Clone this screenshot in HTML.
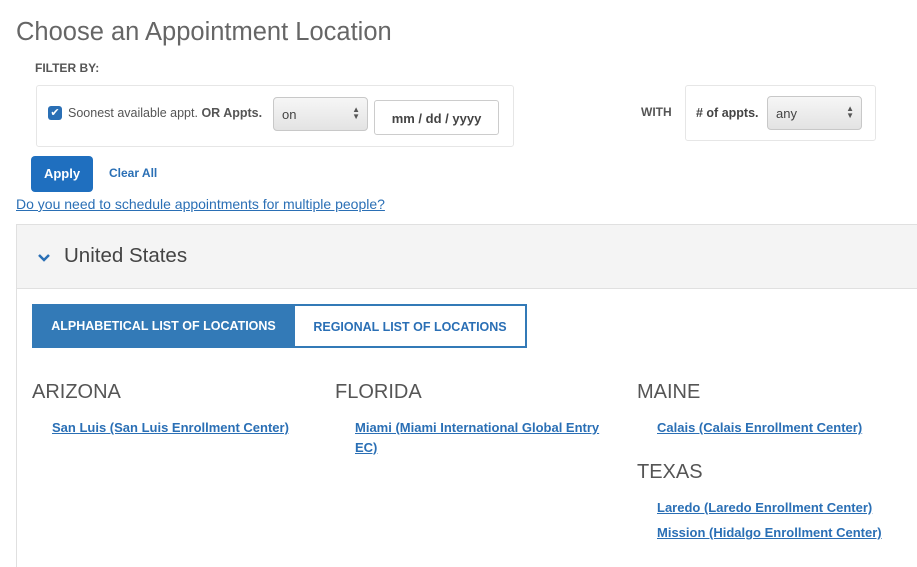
<!DOCTYPE html>
<html><head><style>
html,body{margin:0;width:917px;height:567px;overflow:hidden;background:#fff;font-family:"Liberation Sans",sans-serif;position:relative;color:#555}
.a{position:absolute}
a{color:#2a6fb5;text-decoration:underline}
.box{border:1px solid #e6e6e6;border-radius:3px}
.sel{background:linear-gradient(#f6f6f6,#e3e3e3);border:1px solid #c8c8c8;border-radius:4px;font-size:13px;color:#444}
.arr{position:absolute;right:7px;top:8px;font-size:8px;line-height:7px;color:#555}
.loc{font-size:13px;font-weight:bold;color:#2a6fb5;text-decoration:underline;line-height:20px}
h3{margin:0;font-weight:normal;font-size:20px;color:#555}
</style></head><body>
<div class="a" style="left:16px;top:18px;font-size:25.5px;color:#666">Choose an Appointment Location</div>
<div class="a" style="left:35px;top:61px;font-size:12px;font-weight:bold;color:#555">FILTER BY:</div>
<div class="a box" style="left:36px;top:85px;width:476px;height:60px"></div>
<div class="a" style="left:48px;top:106px;width:14px;height:14px;background:#2a6fb5;border-radius:3px;color:#fff;font-size:11px;text-align:center;line-height:14px">✔</div>
<div class="a" style="left:68px;top:106px;font-size:12.5px">Soonest available appt. <b>OR Appts.</b></div>
<div class="a sel" style="left:273px;top:97px;width:93px;height:32px"><span class="a" style="left:8px;top:9px">on</span><span class="arr">▲<br>▼</span></div>
<div class="a" style="left:374px;top:100px;width:123px;height:33px;border:1px solid #ccc;border-radius:3px;font-size:13px;font-weight:bold;color:#444;text-align:center;line-height:35px">mm / dd / yyyy</div>
<div class="a" style="left:641px;top:105px;font-size:12px;font-weight:bold">WITH</div>
<div class="a box" style="left:685px;top:85px;width:189px;height:54px"></div>
<div class="a" style="left:696px;top:106px;font-size:12.5px;font-weight:bold;color:#444"># of appts.</div>
<div class="a sel" style="left:767px;top:96px;width:93px;height:32px"><span class="a" style="left:8px;top:9px">any</span><span class="arr">▲<br>▼</span></div>
<div class="a" style="left:31px;top:156px;width:62px;height:36px;background:#1f6fbf;border-radius:4px;color:#fff;font-size:13px;font-weight:bold;text-align:center;line-height:36px">Apply</div>
<div class="a" style="left:109px;top:166px;font-size:12px;font-weight:bold;color:#2a6fb5">Clear All</div>
<div class="a" style="left:16px;top:196px;font-size:14px"><a>Do you need to schedule appointments for multiple people?</a></div>
<div class="a" style="left:16px;top:224px;width:910px;height:360px;border:1px solid #e0e0e0"></div>
<div class="a" style="left:17px;top:225px;width:900px;height:63px;background:#f4f4f4;border-bottom:1px solid #e0e0e0"></div>
<svg class="a" style="left:37px;top:253px" width="14" height="10"><path d="M2 2l5 5l5-5" stroke="#2a6fb5" stroke-width="2.5" fill="none"/></svg>
<div class="a" style="left:64px;top:244px;font-size:20.5px;color:#444">United States</div>
<div class="a" style="left:32px;top:304px;width:263px;height:44px;background:#337ab7;color:#fff;font-size:12.5px;font-weight:bold;text-align:center;line-height:44px">ALPHABETICAL LIST OF LOCATIONS</div>
<div class="a" style="left:295px;top:304px;width:230px;height:40px;border:2px solid #337ab7;border-left:none;color:#2a6fb5;font-size:12.5px;font-weight:bold;text-align:center;line-height:42px">REGIONAL LIST OF LOCATIONS</div>
<h3 class="a" style="left:32px;top:381px">ARIZONA</h3>
<div class="a loc" style="left:52px;top:418px">San Luis (San Luis Enrollment Center)</div>
<h3 class="a" style="left:335px;top:381px">FLORIDA</h3>
<div class="a loc" style="left:355px;top:418px;width:260px">Miami (Miami International Global Entry EC)</div>
<h3 class="a" style="left:637px;top:381px">MAINE</h3>
<div class="a loc" style="left:657px;top:418px">Calais (Calais Enrollment Center)</div>
<h3 class="a" style="left:637px;top:461px">TEXAS</h3>
<div class="a loc" style="left:657px;top:498px">Laredo (Laredo Enrollment Center)</div>
<div class="a loc" style="left:657px;top:523px">Mission (Hidalgo Enrollment Center)</div>
</body></html>
